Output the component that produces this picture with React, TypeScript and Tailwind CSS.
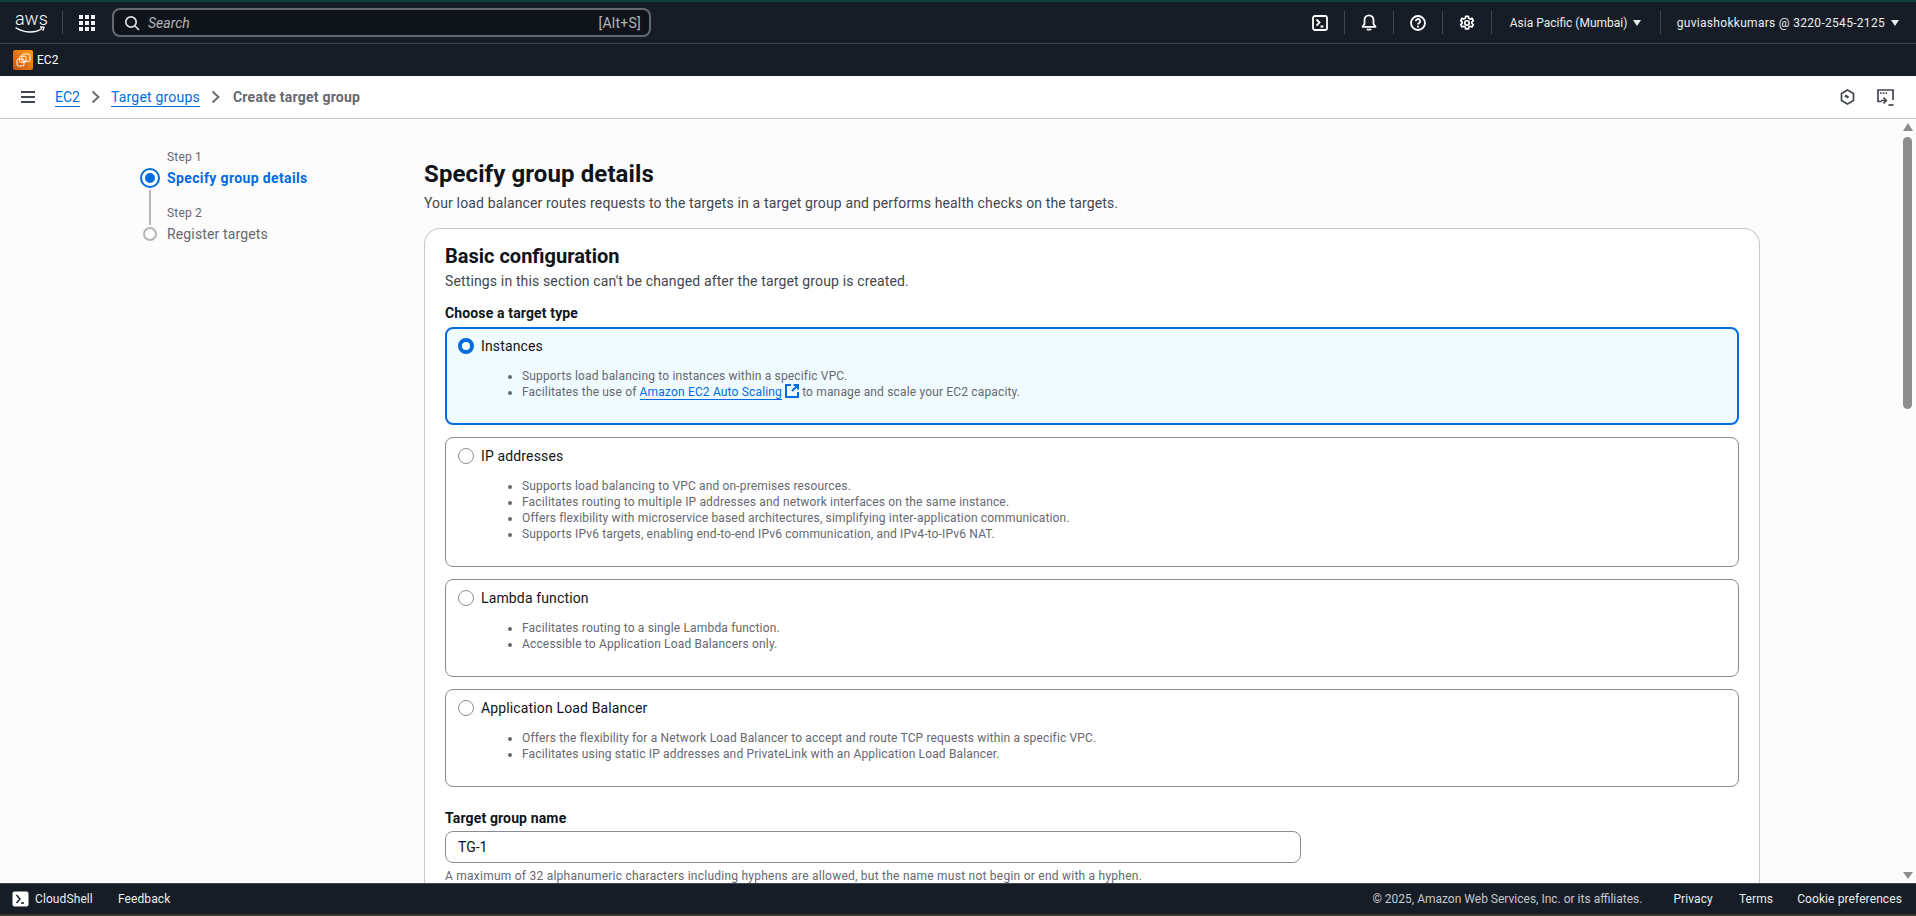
import React from "react";

const F = "font-['Roboto','Noto_Sans',sans-serif]";

function Sep() {
  return <div className="w-px h-[23px] shrink-0 bg-[#424650]" />;
}

function IconCell({ children }: { children: React.ReactNode }) {
  return <div className="w-[48px] flex justify-center">{children}</div>;
}

function TopBar() {
  return (
    <div className="h-[42px] shrink-0 bg-[#161d26] border-b border-[#424650] flex items-center text-[#eaeded]">
      <div className="w-[62px] pl-[15px] shrink-0">
        <svg width="30" height="22" viewBox="0 0 30 22" fill="none" overflow="visible">
          <text x="0" y="13" fontSize="18" letterSpacing="0.200" fontWeight="300" fill="#fff" fontFamily="Roboto, sans-serif">aws</text>
          <path d="M0.500 15.500c8 5.500 20 6 26.500 1" stroke="#fff" strokeWidth="1.500" fill="none" />
          <path d="M25 15l4 .3-1.200 3.500" stroke="#fff" strokeWidth="1.300" fill="none" />
        </svg>
      </div>
      <Sep />
      <div className="grid grid-cols-3 gap-[2px] w-[16px] ml-[16px] mr-[17px] shrink-0">
        {Array.from({ length: 9 }).map((_, i) => (
          <div key={i} className="w-[4px] h-[4px] bg-[#f3f3f7]" />
        ))}
      </div>
      <div className="w-[539px] h-[29px] shrink-0 rounded-[8px] border-2 border-[#656871] bg-[#0f141a] flex items-center pl-[10px] pr-[8px]">
        <svg width="16" height="16" viewBox="0 0 16 16" fill="none" stroke="#dedee3" strokeWidth="1.700" className="shrink-0">
          <circle cx="7" cy="7" r="5.200" />
          <path d="M11 11l4 4" />
        </svg>
        <span className="ml-[8px] pt-[1px] text-[14px] italic text-[#b4b4bb]">Search</span>
        <span className="ml-auto pt-[1px] text-[14px] tracking-[0.25px] text-[#b4b4bb]">[Alt+S]</span>
      </div>
      <div className="ml-auto flex items-center h-full">
        <IconCell>
          <svg width="16" height="16" viewBox="0 0 16 16" fill="none" stroke="#fff" strokeWidth="1.800">
            <rect x="1" y="1" width="14" height="14" rx="2" />
            <path d="M4.500 4.500l3 3-3 3.200M8.500 11.500h3" />
          </svg>
        </IconCell>
        <Sep />
        <IconCell>
          <svg width="16" height="17" viewBox="0 0 16 17" fill="none" stroke="#fff" strokeWidth="1.800">
            <path d="M1.500 12.800h13L12.500 10V5.800a4.500 4.500 0 0 0-9 0V10z" strokeLinejoin="round" />
            <path d="M6 14.800c1 1.200 3 1.200 4 0" />
          </svg>
        </IconCell>
        <Sep />
        <IconCell>
          <svg width="16" height="16" viewBox="0 0 16 16" fill="none" stroke="#fff" strokeWidth="1.800">
            <circle cx="8" cy="8" r="7" />
            <path d="M5.800 6.200a2.200 2.200 0 1 1 3.300 1.900c-.7.400-1.100.8-1.100 1.500" />
            <path d="M8 10.800v1.600" />
          </svg>
        </IconCell>
        <Sep />
        <IconCell>
          <svg width="16" height="16" viewBox="0 0 18 18" fill="none" stroke="#fff" strokeWidth="1.900" strokeLinejoin="round">
            <path d="M7.500 1.500h3l.5 2.200 1.500.8 2.100-.8 1.500 2.600-1.600 1.500v1.600l1.600 1.500-1.500 2.600-2.100-.8-1.500.8-.5 2.200h-3l-.5-2.200-1.500-.8-2.100.8-1.500-2.600 1.600-1.500V7.800L1.900 6.300l1.500-2.600 2.100.8L7 3.700z" />
            <circle cx="9" cy="9" r="2.500" />
          </svg>
        </IconCell>
        <Sep />
        <div className="w-[168px] pl-[18px] pt-[1px] flex items-center gap-[6px] text-[12px] whitespace-nowrap">
          Asia Pacific (Mumbai) <span className="w-0 h-0 border-x-[4px] border-x-transparent border-t-[6px] border-t-[#eaeded]" />
        </div>
        <Sep />
        <div className="pl-[16px] pr-[17px] pt-[1px] flex items-center gap-[6px] text-[12px] tracking-[0.3px] whitespace-nowrap">
          guviashokkumars @ 3220-2545-2125 <span className="w-0 h-0 border-x-[4px] border-x-transparent border-t-[6px] border-t-[#eaeded]" />
        </div>
      </div>
    </div>
  );
}

function ServiceBar() {
  return (
    <div className="h-[32px] shrink-0 bg-[#161d26] flex items-center pl-[13px] text-white">
      <div className="w-[20px] h-[20px] rounded-[2px] bg-gradient-to-tr from-[#c8511b] to-[#f90] flex items-center justify-center">
        <svg width="15" height="14" viewBox="0 0 15 14" fill="none" stroke="#fff" strokeWidth="1">
          <rect x="6" y="1" width="8" height="7.500" rx="1.500" />
          <rect x="3.500" y="3.200" width="6.500" height="6" rx="1.200" />
          <rect x="1" y="6" width="7" height="7" rx="1.500" />
        </svg>
      </div>
      <span className="ml-[4px] text-[12px]">EC2</span>
    </div>
  );
}

function Breadcrumb() {
  const Chevron = () => (
    <svg width="9" height="14" viewBox="0 0 9 14" fill="none" stroke="#656871" strokeWidth="1.800" className="mx-[11px] shrink-0">
      <path d="M1.500 1.500L7.500 7l-6 5.500" />
    </svg>
  );
  return (
    <div className="h-[43px] shrink-0 bg-white border-b border-[#c6c6cd] flex items-center pl-[21px] pr-[22px]">
      <div className="w-[14px] mr-[20px] flex flex-col gap-[3px]">
        <div className="h-[2px] bg-[#424650]" />
        <div className="h-[2px] bg-[#424650]" />
        <div className="h-[2px] bg-[#424650]" />
      </div>
      <span className="text-[14px] text-[#006ce0] border-b border-[#006ce0] leading-[18px] mt-[1px]">EC2</span>
      <Chevron />
      <span className="text-[14px] text-[#006ce0] border-b border-[#006ce0] leading-[18px] mt-[1px] tracking-[0.2px]">Target groups</span>
      <Chevron />
      <span className="text-[14px] font-bold text-[#656871] tracking-[0.25px] ml-[2px] mt-[1px]">Create target group</span>
      <div className="ml-auto flex items-center gap-[22px]">
        <svg width="15" height="16" viewBox="0 0 15 16" fill="none" stroke="#424650" strokeWidth="1.700">
          <path d="M7.500 1l6 3.500v7l-6 3.500-6-3.500v-7z" />
          <path d="M5 6.500l3.500 2" strokeWidth="2.400" />
        </svg>
        <svg width="17" height="17" viewBox="0 0 17 17" fill="none" stroke="#424650" strokeWidth="1.700">
          <path d="M4.500 12.500H1V1h15v10" />
          <path d="M3 4.200h1.500M5.800 4.200h1.500M8.600 4.200h1.500" strokeWidth="1.800" />
          <path d="M4 11.500h5M6.500 8.500l2.800 3-2.800 3" />
          <path d="M11.500 16h5" />
        </svg>
      </div>
    </div>
  );
}

function Steps() {
  return (
    <div className="w-[424px] shrink-0 pl-[140px] pt-[30px]">
      <div className="text-[12px] leading-[16px] text-[#656871] ml-[27px] tracking-[0.18px]">Step 1</div>
      <div className="flex items-center h-[20px] mt-[3px]">
        <div className="w-[20px] h-[20px] rounded-full border-2 border-[#006ce0] flex items-center justify-center bg-white">
          <div className="w-[10px] h-[10px] rounded-full bg-[#006ce0]" />
        </div>
        <span className="ml-[7px] text-[14px] font-bold text-[#006ce0] whitespace-nowrap tracking-[0.37px]">Specify group details</span>
      </div>
      <div className="flex">
        <div className="ml-[9px] mt-[2px] w-[2px] h-[35px] bg-[#b4b4bb]" />
        <div className="ml-[16px] mt-[17px] text-[12px] leading-[16px] text-[#656871] tracking-[0.18px]">Step 2</div>
      </div>
      <div className="flex items-center h-[20px] mt-[-1px]">
        <div className="w-[14px] h-[14px] ml-[3px] rounded-full border-2 border-[#b4b4bb]" />
        <span className="ml-[10px] text-[14px] text-[#656871] whitespace-nowrap tracking-[0.14px]">Register targets</span>
      </div>
    </div>
  );
}

function OptionCard({
  title,
  items,
  h,
  selected,
  children,
}: {
  title: string;
  items: string[];
  h: string;
  selected?: boolean;
  children?: React.ReactNode;
}) {
  return (
    <div
      className={`${h} rounded-[8px] ${
        selected ? "border-2 border-[#006ce0] bg-[#f0fbff]" : "border border-[#8c8c94] bg-white"
      }`}
    >
      <div className={`flex items-center ${selected ? "pl-[11px] pt-[7px]" : "pl-[12px] pt-[8px]"}`}>
        {selected ? (
          <div className="w-[16px] h-[16px] rounded-full border-[4px] border-[#006ce0] bg-white" />
        ) : (
          <div className="w-[16px] h-[16px] rounded-full border border-[#8c8c94] bg-white" />
        )}
        <span className="ml-[7px] text-[14px] leading-[20px] text-[#0f141a] tracking-[0.14px]">{title}</span>
      </div>
      <ul
        className={`mt-[12px] ${selected ? "pl-[75px]" : "pl-[76px]"} pr-[14px] list-disc marker:text-[#656871] text-[12px] leading-[16px] text-[#656871] tracking-[0.16px]`}
      >
        {items.map((t) => (
          <li key={t}>{t}</li>
        ))}
        {children}
      </ul>
    </div>
  );
}

function Panel() {
  return (
    <div className="w-[1336px] h-[700px] shrink-0 rounded-t-[16px] border border-b-0 border-[#c6c6cd] bg-white mt-[15px] pl-[20px] pr-[20px] pt-[15px]">
      <h2 className="text-[20px] leading-[24px] font-bold text-[#0f141a]">Basic configuration</h2>
      <p className="text-[14px] leading-[20px] text-[#424650] mt-[3px] tracking-[0.14px]">
        Settings in this section can't be changed after the target group is created.
      </p>
      <div className="text-[14px] leading-[18px] font-bold text-[#0f141a] mt-[13px] tracking-[0.14px]">Choose a target type</div>
      <div className="mt-[5px] flex flex-col gap-[12px]">
        <OptionCard
          selected
          h="h-[98px]"
          title="Instances"
          items={["Supports load balancing to instances within a specific VPC."]}
        >
          <li>
            Facilitates the use of{" "}
            <span className="text-[#006ce0] border-b border-[#006ce0]">Amazon EC2 Auto Scaling</span>
            <svg width="14" height="14" viewBox="0 0 14 14" fill="none" stroke="#006ce0" strokeWidth="2" className="inline-block ml-[3px] align-[-2px]">
              <path d="M6 1H1v12h12V8" />
              <path d="M8.500 1H13v4.500M13 1L7 7" />
            </svg>{" "}
            to manage and scale your EC2 capacity.
          </li>
        </OptionCard>
        <OptionCard
          h="h-[130px]"
          title="IP addresses"
          items={[
            "Supports load balancing to VPC and on-premises resources.",
            "Facilitates routing to multiple IP addresses and network interfaces on the same instance.",
            "Offers flexibility with microservice based architectures, simplifying inter-application communication.",
            "Supports IPv6 targets, enabling end-to-end IPv6 communication, and IPv4-to-IPv6 NAT.",
          ]}
        />
        <OptionCard
          h="h-[98px]"
          title="Lambda function"
          items={["Facilitates routing to a single Lambda function.", "Accessible to Application Load Balancers only."]}
        />
        <OptionCard
          h="h-[98px]"
          title="Application Load Balancer"
          items={[
            "Offers the flexibility for a Network Load Balancer to accept and route TCP requests within a specific VPC.",
            "Facilitates using static IP addresses and PrivateLink with an Application Load Balancer.",
          ]}
        />
      </div>
      <div className="text-[14px] leading-[18px] font-bold text-[#0f141a] mt-[22px] tracking-[0.14px]">Target group name</div>
      <div className="mt-[4px] w-[856px] h-[32px] rounded-[8px] border border-[#8c8c94] bg-white flex items-center pl-[12px] text-[14px] text-[#0f141a]">
        TG-1
      </div>
      <div className="text-[12px] leading-[16px] text-[#656871] mt-[5px] tracking-[0.24px]">
        A maximum of 32 alphanumeric characters including hyphens are allowed, but the name must not begin or end with a hyphen.
      </div>
    </div>
  );
}

function Scrollbar() {
  return (
    <div className="w-[16px] shrink-0 flex flex-col items-center pt-[4px] pb-[4px] pr-[1px] ml-auto">
      <div className="w-0 h-0 border-x-[5px] border-x-transparent border-b-[8px] border-b-[#8d8d8d]" />
      <div className="w-[9px] h-[272px] mt-[6px] rounded-full bg-[#8d8d8d]" />
      <div className="mt-auto w-0 h-0 border-x-[5px] border-x-transparent border-t-[7px] border-t-[#8d8d8d]" />
    </div>
  );
}

function Footer() {
  return (
    <div className="h-[31px] shrink-0 bg-[#161d26] border-t border-[#424650] flex items-center pl-[12px] pr-[14px] text-[12px] text-[#eaeded]">
      <svg width="17" height="16" viewBox="0 0 17 16" fill="none" className="shrink-0">
        <rect x="0.500" y="0.500" width="16" height="15" rx="2" fill="#fff" />
        <path d="M4.500 4l3.500 4-3.500 4M9 12h3" stroke="#161d26" strokeWidth="1.500" />
      </svg>
      <span className="ml-[6px] tracking-[0.1px]">CloudShell</span>
      <span className="ml-[25px] tracking-[0.1px]">Feedback</span>
      <span className="ml-auto text-[#c6c6cd]">© 2025, Amazon Web Services, Inc. or its affiliates.</span>
      <span className="ml-[31px] tracking-[0.1px]">Privacy</span>
      <span className="ml-[26px] tracking-[0.1px]">Terms</span>
      <span className="ml-[24px] tracking-[0.1px]">Cookie preferences</span>
    </div>
  );
}

export default function App() {
  return (
    <div className={`${F} w-[1916px] h-[916px] overflow-hidden flex flex-col bg-[#161d26]`}>
      <div className="h-[2px] shrink-0 bg-[#0e3f3f]" />
      <TopBar />
      <ServiceBar />
      <Breadcrumb />
      <div className="flex-1 min-h-0 flex bg-[#fcfcfc] overflow-hidden">
        <Steps />
        <div className="shrink-0 pt-[38px]">
          <h1 className="text-[24px] leading-[34px] font-bold tracking-[0.1px] text-[#0f141a]">Specify group details</h1>
          <p className="text-[14px] leading-[20px] text-[#424650] mt-[2px] tracking-[0.14px]">
            Your load balancer routes requests to the targets in a target group and performs health checks on the targets.
          </p>
          <Panel />
        </div>
        <Scrollbar />
      </div>
      <Footer />
      <div className="h-[2px] shrink-0 bg-[#3a3a2a]" />
    </div>
  );
}
